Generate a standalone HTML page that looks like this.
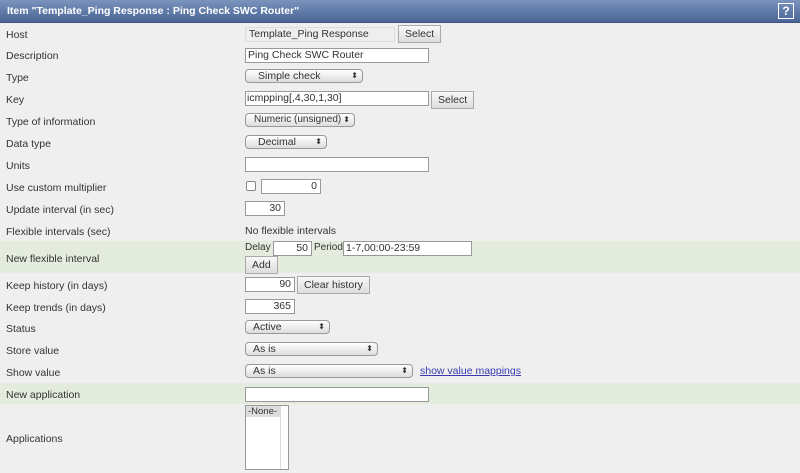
<!DOCTYPE html>
<html><head><style>
body{margin:0;width:800px;height:473px;overflow:hidden;background:#efefef;font-family:"Liberation Sans",sans-serif;font-size:10.5px;color:#333;position:relative}
.hd{position:absolute;left:0;top:0;width:800px;height:22px;background:linear-gradient(#7a94bd,#4a6496);border-bottom:1px solid #3d5580}
.hd span{position:absolute;left:7px;top:5px;color:#fff;font-weight:bold;font-size:10.5px}
.q{position:absolute;right:6px;top:3px;width:14px;height:14px;border:1px solid #fff;color:#fff;font-weight:bold;font-size:12px;text-align:center;line-height:14px}
.l{position:absolute;left:6px}
.g{position:absolute;left:0;width:800px;background:#e3ecdd}
.i{position:absolute;height:15px;border:1px solid #999;background:#fff;box-sizing:border-box;font-size:10.5px;line-height:13px;padding:0 3px;white-space:nowrap}
.r{text-align:right}
.b{position:absolute;height:18px;border:1px solid #aaa;background:linear-gradient(#f8f8f8,#ddd);box-sizing:border-box;font-size:10.5px;line-height:16px;padding:0 6px;white-space:nowrap}
.s{position:absolute;height:14px;border:1px solid #999;border-radius:4px;background:linear-gradient(#fff,#ddd);box-sizing:border-box;font-size:10.5px;line-height:12px;padding:0 0 0 12px;white-space:nowrap;overflow:hidden}
.s:after{content:"⬍";position:absolute;right:4px;top:0;font-size:8px}
.t{position:absolute;white-space:nowrap}
</style></head><body>
<div class="hd"><span>Item "Template_Ping Response : Ping Check SWC Router"</span><div class="q">?</div></div>
<div class="g" style="top:241px;height:32px"></div>
<div class="g" style="top:383px;height:21px"></div>
<div class="l" style="top:29px">Host</div>
<div class="i" style="left:245px;top:27px;width:150px;background:#eee;border-color:#ddd">Template_Ping Response</div>
<div class="b" style="left:398px;top:25px">Select</div>
<div class="l" style="top:50px">Description</div>
<div class="i" style="left:245px;top:48px;width:184px;padding-left:2px">Ping Check SWC Router</div>
<div class="l" style="top:72px">Type</div>
<div class="s" style="left:245px;top:69px;width:118px">Simple check</div>
<div class="l" style="top:94px">Key</div>
<div class="i" style="left:245px;top:91px;width:184px;padding-left:1px">icmpping[,4,30,1,30]</div>
<div class="b" style="left:431px;top:91px">Select</div>
<div class="l" style="top:116px">Type of information</div>
<div class="s" style="left:245px;top:113px;width:110px;padding-left:8px;font-size:10px">Numeric (unsigned)</div>
<div class="l" style="top:138px">Data type</div>
<div class="s" style="left:245px;top:135px;width:82px">Decimal</div>
<div class="l" style="top:160px">Units</div>
<div class="i" style="left:245px;top:157px;width:184px"></div>
<div class="l" style="top:182px">Use custom multiplier</div>
<div class="t" style="left:246px;top:181px;width:8px;height:8px;border:1px solid #888;border-radius:2px;background:#fff"></div>
<div class="i r" style="left:261px;top:179px;width:60px">0</div>
<div class="l" style="top:204px">Update interval (in sec)</div>
<div class="i r" style="left:245px;top:201px;width:40px">30</div>
<div class="l" style="top:226px">Flexible intervals (sec)</div>
<div class="t" style="left:245px;top:225px">No flexible intervals</div>
<div class="l" style="top:253px">New flexible interval</div>
<div class="t" style="left:245px;top:242px;font-size:10px">Delay</div>
<div class="i r" style="left:273px;top:241px;width:39px">50</div>
<div class="t" style="left:314px;top:242px;font-size:10px">Period</div>
<div class="i" style="left:343px;top:241px;width:129px;padding-left:2px">1-7,00:00-23:59</div>
<div class="b" style="left:245px;top:256px">Add</div>
<div class="l" style="top:280px">Keep history (in days)</div>
<div class="i r" style="left:245px;top:277px;width:50px">90</div>
<div class="b" style="left:297px;top:276px">Clear history</div>
<div class="l" style="top:302px">Keep trends (in days)</div>
<div class="i r" style="left:245px;top:299px;width:50px">365</div>
<div class="l" style="top:323px">Status</div>
<div class="s" style="left:245px;top:320px;width:85px;padding-left:7px">Active</div>
<div class="l" style="top:345px">Store value</div>
<div class="s" style="left:245px;top:342px;width:133px;padding-left:7px">As is</div>
<div class="l" style="top:367px">Show value</div>
<div class="s" style="left:245px;top:364px;width:168px;padding-left:7px">As is</div>
<div class="t" style="left:420px;top:365px;color:#3a3ab0;text-decoration:underline;font-size:10.5px">show value mappings</div>
<div class="l" style="top:389px">New application</div>
<div class="i" style="left:245px;top:387px;width:184px"></div>
<div class="l" style="top:433px">Applications</div>
<div class="t" style="left:245px;top:405px;width:42px;height:63px;border:1px solid #999;background:#fff"><div style="width:34px;height:63px;border-right:1px solid #ddd"><div style="background:#ddd;padding-left:2px;font-size:9.5px">-None-</div></div></div>
</body></html>
